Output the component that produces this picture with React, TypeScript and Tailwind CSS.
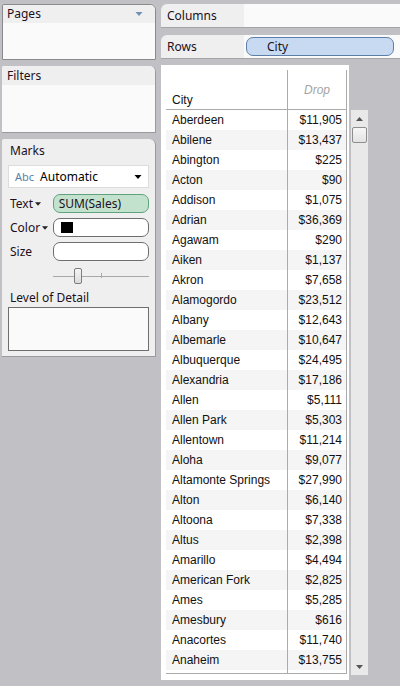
import React from 'react';

const cities: [string, string][] = [
  ['Aberdeen', '$11,905'],
  ['Abilene', '$13,437'],
  ['Abington', '$225'],
  ['Acton', '$90'],
  ['Addison', '$1,075'],
  ['Adrian', '$36,369'],
  ['Agawam', '$290'],
  ['Aiken', '$1,137'],
  ['Akron', '$7,658'],
  ['Alamogordo', '$23,512'],
  ['Albany', '$12,643'],
  ['Albemarle', '$10,647'],
  ['Albuquerque', '$24,495'],
  ['Alexandria', '$17,186'],
  ['Allen', '$5,111'],
  ['Allen Park', '$5,303'],
  ['Allentown', '$11,214'],
  ['Aloha', '$9,077'],
  ['Altamonte Springs', '$27,990'],
  ['Alton', '$6,140'],
  ['Altoona', '$7,338'],
  ['Altus', '$2,398'],
  ['Amarillo', '$4,494'],
  ['American Fork', '$2,825'],
  ['Ames', '$5,285'],
  ['Amesbury', '$616'],
  ['Anacortes', '$11,740'],
  ['Anaheim', '$13,755'],
  ['Anderson', '$4,102'],
];

function Caret({ className = '' }: { className?: string }) {
  return (
    <svg width="7" height="4" viewBox="0 0 7 4" className={className}>
      <path d="M0 0 L7 0 L3.5 4 Z" fill="currentColor" />
    </svg>
  );
}

function Shelf({ label, children }: { label: string; children?: React.ReactNode }) {
  return (
    <div className="flex h-[24px] border-b border-[#a4a4a8]">
      <div className="w-[83px] bg-[#efefef] rounded-tl-[6px] pl-[6px] flex items-center text-[12px] text-[#1c1020]">
        {label}
      </div>
      <div className="flex-1 bg-[#fafafa] flex items-center pl-[2px]">{children}</div>
    </div>
  );
}

function MarkRow({ label, caret, children }: { label: string; caret?: boolean; children: React.ReactNode }) {
  return (
    <div className="flex items-center h-[19px]">
      <div className="w-[45px] pl-[2px] flex items-center gap-[2px] text-[12px] text-[#1c1020]">
        {label}
        {caret && <Caret className="text-[#222] w-[6px]" />}
      </div>
      {children}
    </div>
  );
}

export default function App() {
  return (
    <div className="w-[400px] h-[686px] bg-[#c1c1c5] flex overflow-hidden font-['Noto_Sans',sans-serif] leading-none">
      {/* left side cards */}
      <div className="w-[161px] pl-[2px] pt-[4px] flex flex-col shrink-0">
        <div className="w-[154px] h-[56px] border border-[#8a8a8e] rounded-tr-[6px] rounded-tl-[2px] bg-[#fafafa] overflow-hidden">
          <div className="h-[18px] bg-[#efefef] flex items-center justify-between pl-[4px] pr-[12px] text-[12px] text-[#1c1020]">
            Pages
            <Caret className="text-[#6f8fb5] w-[8px]" />
          </div>
        </div>

        <div className="mt-[6px] w-[154px] h-[67px] border-r border-b border-[#9a9a9e] rounded-tr-[6px] rounded-tl-[2px] bg-[#fafafa] overflow-hidden">
          <div className="h-[19px] bg-[#efefef] flex items-center pl-[5px] text-[12px] text-[#1c1020]">Filters</div>
        </div>

        <div className="mt-[6px] w-[154px] h-[218px] border-r border-b border-[#9a9a9e] rounded-tr-[6px] rounded-tl-[2px] bg-[#efefef] px-[6px] flex flex-col">
          <div className="h-[22px] flex items-center text-[12px] text-[#1c1020] pl-[2px] pt-[2px]">Marks</div>
          <div className="mt-[4px] h-[23px] w-[141px] bg-white border border-[#dcdcdc] flex items-center pl-[6px] pr-[6px]">
            <span className="text-[11px] text-[#5b7fa8]">Abc</span>
            <span className="ml-[6px] text-[12px] text-black flex-1">Automatic</span>
            <Caret className="text-black w-[8px]" />
          </div>
          <div className="mt-[6px] flex flex-col gap-[5px]">
            <MarkRow label="Text" caret>
              <div className="w-[97px] h-[19px] rounded-[7px] border border-[#5fa37e] bg-[#c2e2ce] flex items-center pl-[5px] text-[12px] text-[#1c1020]">
                SUM(Sales)
              </div>
            </MarkRow>
            <MarkRow label="Color" caret>
              <div className="w-[97px] h-[19px] rounded-[7px] border border-[#6e6e6e] bg-white flex items-center pl-[7px]">
                <div className="w-[12px] h-[11px] bg-black" />
              </div>
            </MarkRow>
            <MarkRow label="Size">
              <div className="w-[97px] h-[19px] rounded-[7px] border border-[#6e6e6e] bg-white" />
            </MarkRow>
          </div>
          <div className="mt-[7px] h-[16px] ml-[45px] w-[96px] relative flex items-center">
            <div className="w-full h-px bg-[#a8a8a8]" />
            <div className="absolute left-[48px] top-[5px] w-px h-[5px] bg-[#a8a8a8]" />
            <div className="absolute left-[21px] top-0 w-[8px] h-[16px] rounded-[2px] border border-[#7c7c7c] bg-gradient-to-b from-[#f4f4f4] to-[#dcdcdc]" />
          </div>
          <div className="mt-[8px] text-[12px] text-[#1c1020] pl-[2px]">Level of Detail</div>
          <div className="mt-[3px] w-[141px] h-[44px] bg-[#fafafa] border border-[#6e6e6e]" />
        </div>
      </div>

      {/* right side */}
      <div className="flex-1 pt-[4px] flex flex-col min-w-0">
        <Shelf label="Columns" />
        <div className="mt-[7px]">
          <Shelf label="Rows">
            <div className="w-[148px] h-[19px] rounded-[7px] border border-[#5b7fa8] bg-[#c8daf1] flex items-center pl-[20px] text-[12px] text-[#1c1020]">
              City
            </div>
          </Shelf>
        </div>

        <div className="mt-[6px] flex items-start">
          <div className="w-[188px] h-[615px] bg-white pt-[5px] pl-[5px]">
            <div className="w-[181px] font-['Liberation_Sans',Arial,sans-serif] text-[12px] text-[#111]">
              <div className="flex h-[40px] border-b border-[#ababab]">
                <div className="w-[121px] flex items-end pl-[6px] pb-[3px]">City</div>
                <div className="w-[60px] border-l border-r border-[#ababab] flex items-center justify-center pt-[1px] italic text-[#a4a4a4]">
                  Drop
                </div>
              </div>
              <div className="h-[564px] overflow-hidden border-b border-[#ababab]">
                {cities.map(([city, v], i) => (
                  <div key={city} className={`flex h-[20px] ${i % 2 === 1 ? 'bg-[#f5f5f5]' : 'bg-white'}`}>
                    <div className="w-[121px] flex items-center pl-[6px] whitespace-nowrap">{city}</div>
                    <div className="w-[60px] border-l border-r border-[#ababab] flex items-center justify-end pr-[4px]">
                      {v}
                    </div>
                  </div>
                ))}
              </div>
            </div>
          </div>

          <div className="ml-[2px] mt-[45px] w-[17px] h-[565px] bg-[#e9e9e9] flex flex-col items-center">
            <div className="h-[17px] flex items-center justify-center">
              <svg width="7" height="4" viewBox="0 0 7 4">
                <path d="M0 4 L7 4 L3.5 0 Z" fill="#555" />
              </svg>
            </div>
            <div className="w-[15px] h-[16px] rounded-[2px] border border-[#8e8e8e] bg-gradient-to-b from-[#f7f7f7] to-[#e3e3e3]" />
            <div className="flex-1" />
            <div className="h-[17px] flex items-center justify-center">
              <svg width="7" height="4" viewBox="0 0 7 4">
                <path d="M0 0 L7 0 L3.5 4 Z" fill="#555" />
              </svg>
            </div>
          </div>
        </div>
      </div>
    </div>
  );
}
